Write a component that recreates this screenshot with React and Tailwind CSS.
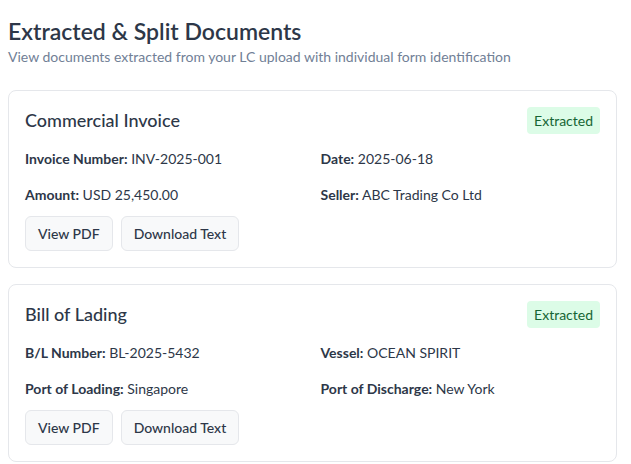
import React from "react";

const docs = [
  {
    title: "Commercial Invoice",
    fields: [
      ["Invoice Number:", "INV-2025-001"],
      ["Date:", "2025-06-18"],
      ["Amount:", "USD 25,450.00"],
      ["Seller:", "ABC Trading Co Ltd"],
    ],
  },
  {
    title: "Bill of Lading",
    fields: [
      ["B/L Number:", "BL-2025-5432"],
      ["Vessel:", "OCEAN SPIRIT"],
      ["Port of Loading:", "Singapore"],
      ["Port of Discharge:", "New York"],
    ],
  },
];

function Card({ doc }) {
  return (
    <div className="mb-4 rounded-lg border border-[#e5e7eb] bg-white px-4 pt-4 pb-4">
      <div className="flex items-center justify-between">
        <h3 className="text-[18px] font-medium text-[#2d3748] leading-[27px]">{doc.title}</h3>
        <span className="rounded-[4px] bg-[#dcfce7] px-[7px] py-[4px] text-[14px] leading-[19px] text-[#166534]">
          Extracted
        </span>
      </div>
      <div className="mt-[15px] grid grid-cols-2 gap-x-4 gap-y-4">
        {doc.fields.map(([k, v]) => (
          <div key={k} className="text-[14px] leading-[20px] text-[#2d3748]">
            <span className="font-bold">{k}</span> {v}
          </div>
        ))}
      </div>
      <div className="mt-[11px] flex gap-2">
        <button className="h-[35px] rounded-md border border-[#e5e7eb] bg-[#f8f9fa] px-3 text-[14px] font-medium text-[#2d3748]">
          View PDF
        </button>
        <button className="h-[35px] rounded-md border border-[#e5e7eb] bg-[#f8f9fa] px-3 text-[14px] font-medium text-[#2d3748]">
          Download Text
        </button>
      </div>
    </div>
  );
}

export default function App() {
  return (
    <div className="min-h-screen bg-white pl-2 pr-[14px] pt-[15px]" style={{ fontFamily: 'Lato, sans-serif' }}>
      <h1 className="text-[23px] font-semibold leading-[32px] text-[#2d3748]">Extracted &amp; Split Documents</h1>
      <p className="text-[14px] leading-[20px] text-[#718096]">
        View documents extracted from your LC upload with individual form identification
      </p>
      <div className="mt-[23px]">
        {docs.map((d) => (
          <Card key={d.title} doc={d} />
        ))}
      </div>
    </div>
  );
}
